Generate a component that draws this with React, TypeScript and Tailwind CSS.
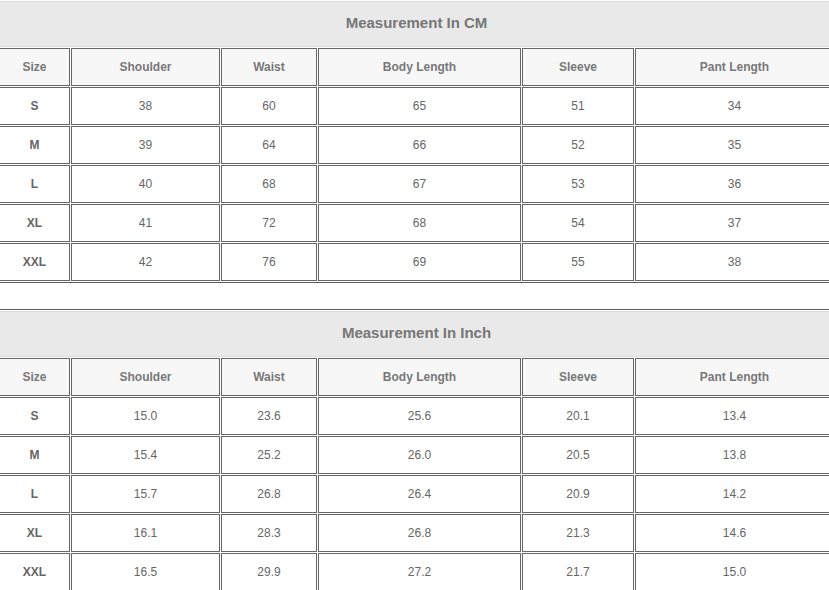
import React from "react";

const headers = ["Size", "Shoulder", "Waist", "Body Length", "Sleeve", "Pant Length"];
const widths = [71, 149, 96, 203, 112, 199];

const cm = [
  ["S", "38", "60", "65", "51", "34"],
  ["M", "39", "64", "66", "52", "35"],
  ["L", "40", "68", "67", "53", "36"],
  ["XL", "41", "72", "68", "54", "37"],
  ["XXL", "42", "76", "69", "55", "38"],
];
const inch = [
  ["S", "15.0", "23.6", "25.6", "20.1", "13.4"],
  ["M", "15.4", "25.2", "26.0", "20.5", "13.8"],
  ["L", "15.7", "26.8", "26.4", "20.9", "14.2"],
  ["XL", "16.1", "28.3", "26.8", "21.3", "14.6"],
  ["XXL", "16.5", "29.9", "27.2", "21.7", "15.0"],
];

function SizeTable({ title, rows, className }: { title: string; rows: string[][]; className: string }) {
  return (
    <table
      className={`table-fixed border-separate border-spacing-[1px] border border-[#5f5f5f] ml-[-3px] w-[839px] ${className}`}
    >
      <colgroup>
        {widths.map((w, i) => (
          <col key={i} style={{ width: w }} />
        ))}
      </colgroup>
      <tbody>
        <tr>
          <td
            colSpan={6}
            className="h-[46px] p-0 pb-[2px] border border-[#dcdcdc] bg-[#e9e9e9] text-center align-middle text-[15px] font-bold text-[#777777]"
          >
            {title}
          </td>
        </tr>
        <tr>
          {headers.map((h) => (
            <td
              key={h}
              className="h-[38px] p-0 border border-[#666666] bg-[#f7f7f7] text-center align-middle text-[12px] font-bold text-[#777777]"
            >
              {h}
            </td>
          ))}
        </tr>
        {rows.map((r) => (
          <tr key={r[0]}>
            {r.map((v, i) => (
              <td
                key={i}
                className={`h-[38px] p-0 border border-[#666666] bg-white text-center align-middle text-[12px] ${
                  i === 0 ? "font-bold text-[#666666]" : "text-[#666666]"
                }`}
              >
                {v}
              </td>
            ))}
          </tr>
        ))}
      </tbody>
    </table>
  );
}

export default function App() {
  return (
    <div
      className="w-[829px] h-[590px] overflow-hidden bg-white"
      style={{ fontFamily: '"Liberation Sans", Arial, sans-serif' }}
    >
      <SizeTable title="Measurement In CM" rows={cm} className="mt-[-1px]" />
      <SizeTable title="Measurement In Inch" rows={inch} className="mt-[26px]" />
    </div>
  );
}
